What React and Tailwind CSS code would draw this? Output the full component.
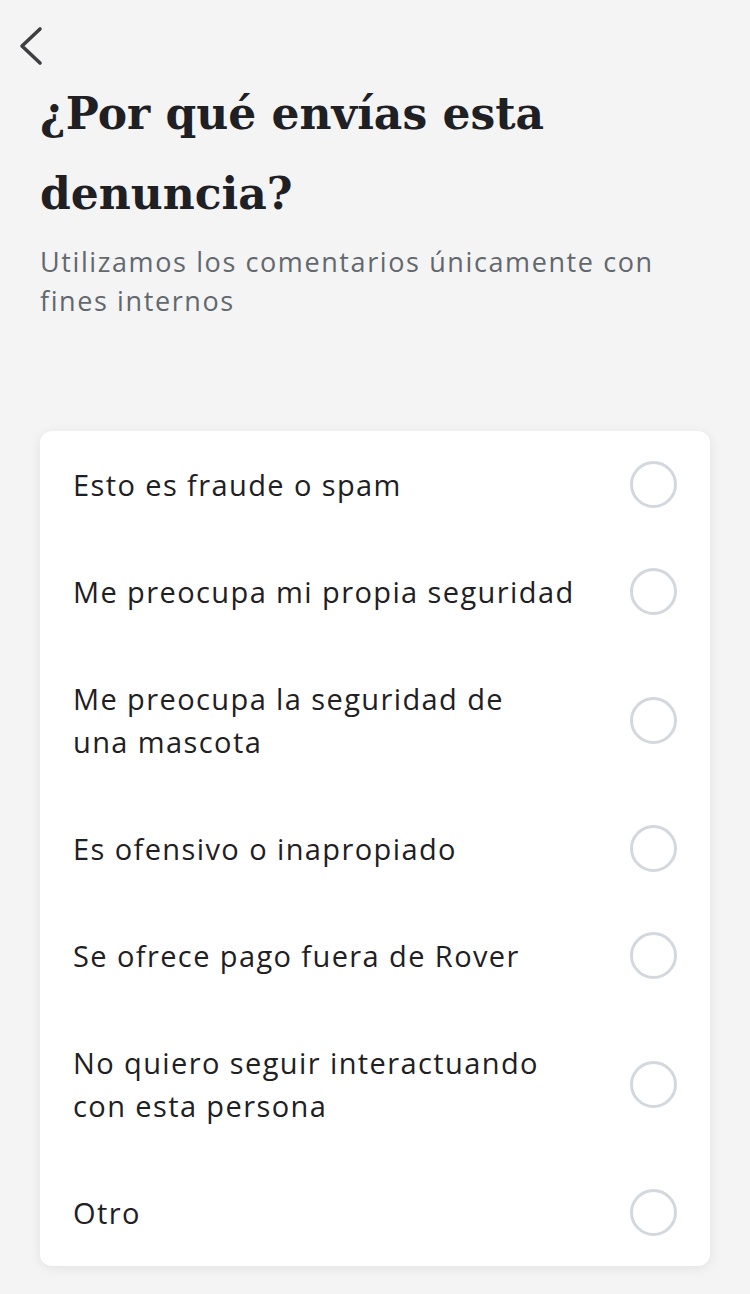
import React from "react";

const options = [
  ["Esto es fraude o spam"],
  ["Me preocupa mi propia seguridad"],
  ["Me preocupa la seguridad de", "una mascota"],
  ["Es ofensivo o inapropiado"],
  ["Se ofrece pago fuera de Rover"],
  ["No quiero seguir interactuando", "con esta persona"],
  ["Otro"],
];

export default function App() {
  return (
    <div className="min-h-[1294px] w-[750px] bg-[#f4f4f5] font-['Open_Sans',sans-serif]">
      <div className="pl-[16px] pt-[26px]">
        <svg width="30" height="40" viewBox="0 0 30 40" fill="none">
          <path d="M24 3 L6 20 L24 37" stroke="#3f3f42" strokeWidth="3.6" strokeLinecap="round" strokeLinejoin="round" />
        </svg>
      </div>
      <div className="px-[40px]">
        <h1 className="mt-[8px] font-['DejaVu_Serif',serif] text-[44px] font-bold leading-[80px] text-[#1f2023]">
          ¿Por qué envías esta
          <br />
          denuncia?
        </h1>
        <p className="mt-[8px] text-[27px] leading-[39px] tracking-[1.6px] text-[#62686e]">
          Utilizamos los comentarios únicamente con
          <br />
          fines internos
        </p>
      </div>
      <div className="mx-[40px] mt-[111px] rounded-[12px] bg-white shadow-[0_2px_12px_rgba(0,0,0,0.08)]">
        {options.map((o) => (
          <div key={o[0]} className="flex items-center justify-between px-[33px] py-[30px]">
            <span className="py-[2px] text-[29px] leading-[43px] tracking-[1.4px] text-[#1f2023]">
              {o.map((l, i) => (
                <span key={i} className="block">{l}</span>
              ))}
            </span>
            <span className="h-[47px] w-[47px] shrink-0 rounded-full border-[3px] border-[#d3d8de]" />
          </div>
        ))}
      </div>
    </div>
  );
}
